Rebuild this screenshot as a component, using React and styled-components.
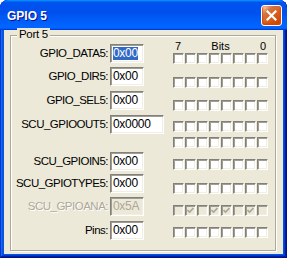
import React from 'react'
import styled, { createGlobalStyle } from 'styled-components'

const GlobalStyle = createGlobalStyle`
  html, body {
    margin: 0;
    padding: 0;
    background: #fff;
  }
  body {
    font-family: 'Liberation Sans', Arial, sans-serif;
  }
`

const Window = styled.div`
  width: 287px;
  height: 258px;
  box-sizing: border-box;
  display: flex;
  flex-direction: column;
  padding: 0 4px 4px;
  background: #0855dd;
  border-radius: 8px 8px 0 0;
  box-shadow: inset -1px -1px #00138c, inset 1px 1px #0831d9, inset -2px -2px #001ea0,
    inset 2px 2px #166aee, inset -3px -3px #003bda, inset 3px 3px #0855dd;
  overflow: hidden;
`

const TitleBar = styled.div`
  flex-shrink: 0;
  height: 30px;
  box-sizing: border-box;
  margin: 0 -4px;
  padding: 0 5px 0 7px;
  display: flex;
  align-items: center;
  justify-content: space-between;
  background: linear-gradient(180deg, #0997ff, #0053ee 8%, #0050ee 40%, #0066ff 88%, #0066ff 93%, #005bff 95%, #003dd7 96%, #003dd7);
  border-radius: 8px 8px 0 0;
`

const Title = styled.div`
  padding-top: 2px;
  color: #fff;
  font-weight: bold;
  font-size: 12px;
  text-shadow: 1px 1px #0f1089;
`

const CloseButton = styled.div`
  width: 21px;
  height: 21px;
  box-sizing: border-box;
  border: 1px solid #fff;
  border-radius: 3px;
  display: flex;
  align-items: center;
  justify-content: center;
  background: radial-gradient(circle at 90% 90%, #cc4600 0%, #dc6527 55%, #cd7546 70%, #ffccb2 90%, #fff 100%);
  box-shadow: inset 0 -1px 2px 1px #da4600;
`

const Body = styled.div`
  flex: 1;
  display: flex;
  padding: 5px 7px 3px 6px;
  background: #ece9d8;
`

const GroupBox = styled.div`
  flex: 1;
  position: relative;
  border: 1px solid #aca899;
  box-shadow: inset 1px 1px #fff, 1px 1px #fff;
  padding: 8px 0 0;
  font-size: 11.5px;
`

const Legend = styled.div`
  position: absolute;
  top: -8px;
  left: 6px;
  padding: 0 2px;
  line-height: 13px;
  background: #ece9d8;
  color: #000;
  letter-spacing: -0.3px;
`

const Row = styled.div`
  display: flex;
  align-items: flex-start;
  height: ${(p) => p.$h}px;
`

const Field = styled.div`
  width: 162px;
  display: flex;
  align-items: center;
  gap: 2px;
`

const Label = styled.div`
  width: 97px;
  text-align: right;
  line-height: 19px;
  white-space: nowrap;
  letter-spacing: -0.5px;
  color: ${(p) => (p.$disabled ? '#aca899' : '#000')};
  text-shadow: ${(p) => (p.$disabled ? '1px 1px #fff' : 'none')};
`

const TextBox = styled.div`
  width: ${(p) => p.$w}px;
  height: 19px;
  box-sizing: border-box;
  padding: 2px 0 0 2px;
  border: 1px solid;
  border-color: #828078 #fff #fff #828078;
  box-shadow: inset 1px 1px #a09e94, inset -1px -1px #f1efe2;
  background: ${(p) => (p.$disabled ? '#ece9d8' : '#fff')};
  color: ${(p) => (p.$disabled ? '#aca899' : '#000')};
  font-size: 12px;
  line-height: 13px;
  letter-spacing: -0.3px;
`

const Selected = styled.span`
  display: inline-block;
  background: #316ac5;
  color: #fff;
`

const Bits = styled.div`
  width: 96px;
  margin-top: ${(p) => p.$mt}px;
  display: flex;
  flex-direction: column;
  gap: 5px;
`

const BitsHeader = styled.div`
  height: 12px;
  margin-bottom: -5px;
  padding: 0 3px 0 2px;
  display: flex;
  justify-content: space-between;
  line-height: 11px;
  font-size: 11px;
`

const BitLine = styled.div`
  display: flex;
  gap: 1px;
`

const Check = styled.div`
  width: 11px;
  height: 11px;
  box-sizing: border-box;
  border: 1px solid;
  border-color: #828078 #fff #fff #828078;
  box-shadow: inset 1px 1px #a09e94, inset -1px -1px #f1efe2;
  background: ${(p) => (p.$disabled ? '#ece9d8' : '#fff')};
  display: flex;
  align-items: center;
  justify-content: center;
`

const rows = [
  { name: 'GPIO_DATA5', value: '0x00', h: 23, cb: 8, header: true, selected: true },
  { name: 'GPIO_DIR5', value: '0x00', h: 24, cb: 9 },
  { name: 'GPIO_SEL5', value: '0x00', h: 24, cb: 8 },
  { name: 'SCU_GPIOOUT5', value: '0x0000', wide: true, lines: 2, h: 37, cb: 5 },
  { name: 'SCU_GPIOIN5', value: '0x00', h: 22, cb: 6 },
  { name: 'SCU_GPIOTYPE5', value: '0x00', h: 23, cb: 8 },
  { name: 'SCU_GPIOANA', value: '0x5A', disabled: true, h: 24, cb: 7, mask: '01011010' },
  { name: 'Pins', value: '0x00', h: 19, cb: 5 },
]

const CheckMark = () => (
  <svg width="7" height="7" viewBox="0 0 7 7">
    <polyline points="0.5,3 2.5,5 6.5,1" fill="none" stroke="#aca899" strokeWidth="1.6" />
  </svg>
)

const BitBoxes = ({ mask, disabled }) => (
  <BitLine>
    {Array.from({ length: 8 }, (_, i) => (
      <Check key={i} $disabled={disabled}>
        {mask && mask[i] === '1' && <CheckMark />}
      </Check>
    ))}
  </BitLine>
)

const App = () => {
  return (
    <>
      <GlobalStyle />
      <Window>
        <TitleBar>
          <Title>GPIO 5</Title>
          <CloseButton>
            <svg width="11" height="11" viewBox="0 0 11 11">
              <path d="M1.5 1.5 L9.5 9.5 M9.5 1.5 L1.5 9.5" stroke="#fff" strokeWidth="2.2" strokeLinecap="square" />
            </svg>
          </CloseButton>
        </TitleBar>
        <Body>
          <GroupBox>
            <Legend>Port 5</Legend>
            {rows.map((r) => (
              <Row key={r.name} $h={r.h}>
                <Field>
                  <Label $disabled={r.disabled}>{r.name}:</Label>
                  <TextBox $w={r.wide ? 54 : 34} $disabled={r.disabled}>
                    {r.selected ? <Selected>{r.value}</Selected> : r.value}
                  </TextBox>
                </Field>
                <Bits $mt={r.header ? r.cb - 11 : r.cb + 1}>
                  {r.header && (
                    <BitsHeader>
                      <span>7</span>
                      <span>Bits</span>
                      <span>0</span>
                    </BitsHeader>
                  )}
                  {Array.from({ length: r.lines || 1 }, (_, i) => (
                    <BitBoxes key={i} mask={r.mask} disabled={r.disabled} />
                  ))}
                </Bits>
              </Row>
            ))}
          </GroupBox>
        </Body>
      </Window>
    </>
  )
}

export default App
